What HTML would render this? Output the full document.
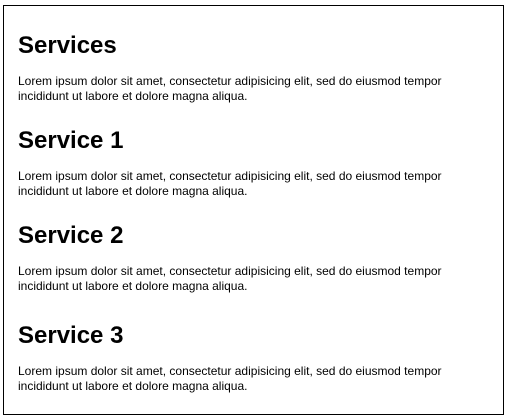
<!DOCTYPE html>
<html><head><meta charset="utf-8"><style>
html,body{margin:0;padding:0;background:#fff;width:507px;height:420px;overflow:hidden}
body{font-family:"Liberation Sans",Arial,sans-serif;color:#000;position:relative}
.box{position:absolute;left:3px;top:5px;width:499px;height:408px;border:1px solid #000}
h1,h2{position:absolute;left:18px;margin:0;font-size:24px;line-height:28px;font-weight:bold}
p{position:absolute;left:18px;margin:0;font-size:12px;line-height:15px;width:470px}
</style></head><body>
<div class="box"></div>
<h1 style="top:32px">Services</h1>
<p style="top:74px">Lorem ipsum dolor sit amet, consectetur adipisicing elit, sed do eiusmod tempor<br>incididunt ut labore et dolore magna aliqua.</p>
<h2 style="top:127px">Service 1</h2>
<p style="top:169px">Lorem ipsum dolor sit amet, consectetur adipisicing elit, sed do eiusmod tempor<br>incididunt ut labore et dolore magna aliqua.</p>
<h2 style="top:222px">Service 2</h2>
<p style="top:264px">Lorem ipsum dolor sit amet, consectetur adipisicing elit, sed do eiusmod tempor<br>incididunt ut labore et dolore magna aliqua.</p>
<h2 style="top:322px">Service 3</h2>
<p style="top:364px">Lorem ipsum dolor sit amet, consectetur adipisicing elit, sed do eiusmod tempor<br>incididunt ut labore et dolore magna aliqua.</p>
</body></html>
